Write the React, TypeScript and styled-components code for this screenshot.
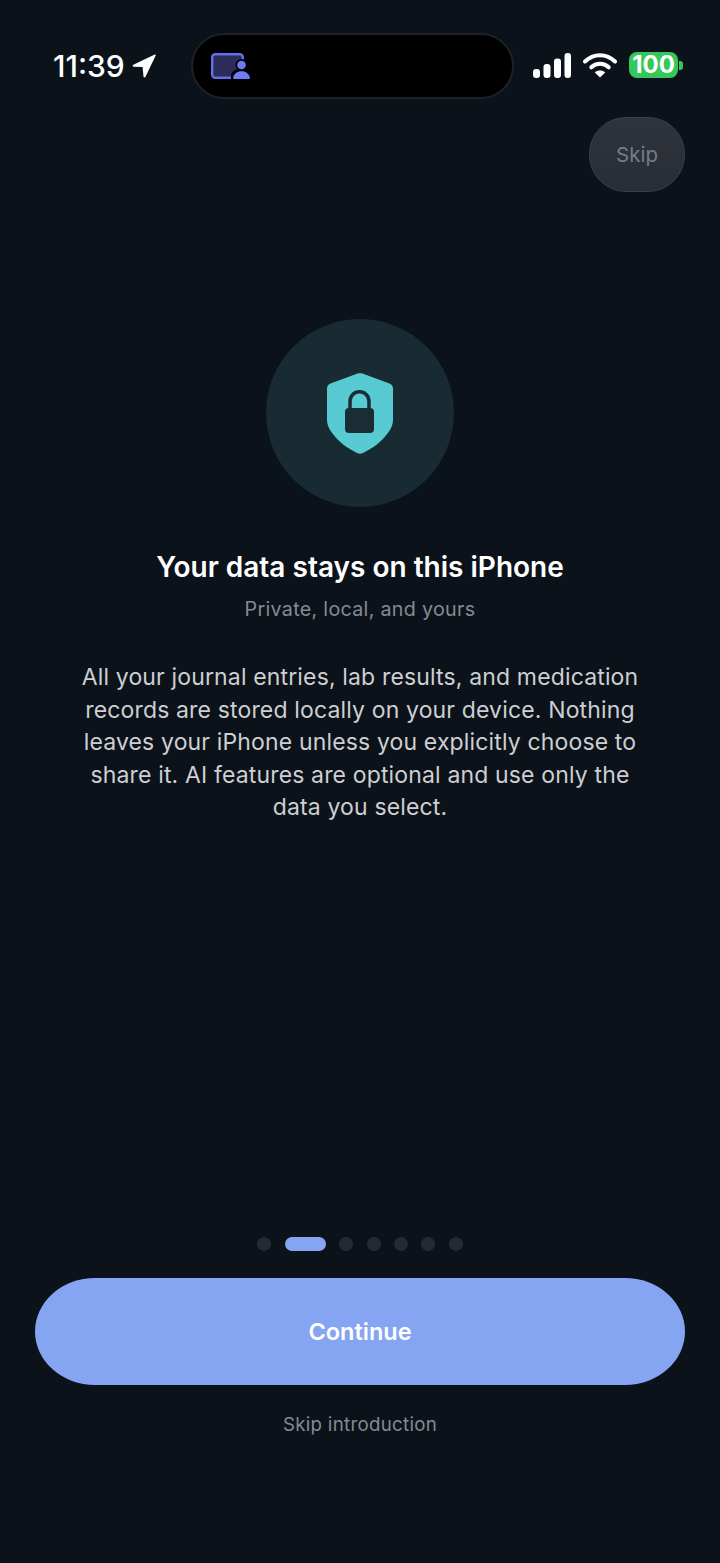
import React from 'react'
import styled, { createGlobalStyle } from 'styled-components'

const GlobalStyle = createGlobalStyle`
html, body {
  margin: 0;
  padding: 0;
  background: #0c121a;
}
* {
  box-sizing: border-box;
}
`

const DOT_COUNT = 7
const ACTIVE_DOT = 1

const App = () => {
  return (
    <Page>
      <GlobalStyle />
      <StatusBar>
        <TimeGroup>
          <Time>11:39</Time>
          <svg width="24" height="24" viewBox="0 0 24 24">
            <path d="M22.800 .6 1.300 10.800c-1 .5-.7 2 .4 2l8.900.2.9 9.500c.1 1.100 1.500 1.300 2 .3L23.700 1.600c.3-.7-.3-1.300-.9-1Z" fill="#fff" />
          </svg>
        </TimeGroup>
        <Island>
          <svg width="40" height="27" viewBox="0 0 40 27">
            <rect x="1.200" y="1.200" width="30.600" height="23.600" rx="3" fill="#2b2d58" stroke="#626eea" strokeWidth="2.400" />
            <circle cx="30.500" cy="12" r="6" fill="#000" />
            <path d="M20 27v-5c1-4 5-6 10.500-6s10 2 10 6v5Z" fill="#000" />
            <circle cx="30.500" cy="12" r="4.300" fill="#6f7bf5" />
            <path d="M23.500 26c-1 0-1.600-.7-1.400-1.600.7-3.600 4.200-6.200 8.400-6.200s7.700 2.600 8.400 6.200c.2.900-.4 1.600-1.400 1.600Z" fill="#6f7bf5" />
          </svg>
        </Island>
        <StatusIcons>
          <svg width="38" height="25" viewBox="0 0 38 25">
            <rect x="0" y="16" width="7" height="9" rx="3" fill="#fff" />
            <rect x="10.500" y="11" width="7" height="14" rx="3" fill="#fff" />
            <rect x="21" y="5.500" width="7" height="19.500" rx="3" fill="#fff" />
            <rect x="31.500" y="0" width="6.500" height="25" rx="3" fill="#fff" />
          </svg>
          <svg width="34" height="26" viewBox="0 0 34 26">
            <path d="M2 9.500C10.500 1 23.500 1 32 9.500" fill="none" stroke="#fff" strokeWidth="4" strokeLinecap="round" />
            <path d="M8.300 15.300c5-4.700 12.400-4.700 17.400 0" fill="none" stroke="#fff" strokeWidth="4" strokeLinecap="round" />
            <path d="M17 25.500 11.800 20.400c2.900-2.500 7.500-2.500 10.400 0Z" fill="#fff" />
          </svg>
          <Battery>
            <BatteryBody>100</BatteryBody>
            <BatteryCap />
          </Battery>
        </StatusIcons>
      </StatusBar>

      <SkipRow>
        <SkipButton>Skip</SkipButton>
      </SkipRow>

      <Content>
        <IconCircle>
          <svg width="66" height="81" viewBox="0 0 66 81">
            <path
              d="M30.600 .5 3.500 10.400C1.400 11.200 0 13 0 15.200V46C0 52 2 56 6 61 12 69 20 75 30 80c2 1 4 1 6 0 10-5 18-11 24-19 4-5 6-9 6-15V15.200c0-2.200-1.400-4-3.500-4.800L35.400 .5c-1.600-.5-3.200-.5-4.800 0Z"
              fill="#57cbd1"
            />
            <path
              d="M23 36V28.300a9.500 9.500 0 0 1 19 0V36"
              fill="none"
              stroke="#1a2c34"
              strokeWidth="3.500"
            />
            <rect x="18" y="35" width="29" height="25" rx="4" fill="#1a2c34" />
          </svg>
        </IconCircle>
        <Title>Your data stays on this iPhone</Title>
        <Subtitle>Private, local, and yours</Subtitle>
        <Body>
          All your journal entries, lab results, and medication
          <br />
          records are stored locally on your device. Nothing
          <br />
          leaves your iPhone unless you explicitly choose to
          <br />
          share it. AI features are optional and use only the
          <br />
          data you select.
        </Body>
      </Content>

      <Footer>
        <Dots>
          {Array.from({ length: DOT_COUNT }).map((_, i) => (
            <Dot key={i} $active={i === ACTIVE_DOT} />
          ))}
        </Dots>
        <ContinueButton>Continue</ContinueButton>
        <SkipIntro>Skip introduction</SkipIntro>
      </Footer>
    </Page>
  )
}

export default App

const Page = styled.div`
width: 720px;
height: 1563px;
background: #0c121a;
display: flex;
flex-direction: column;
overflow: hidden;
font-family: Inter, "Liberation Sans", sans-serif;
`

const StatusBar = styled.div`
display: flex;
align-items: center;
height: 66px;
margin-top: 33px;
padding-left: 53px;
`

const TimeGroup = styled.div`
display: flex;
align-items: center;
gap: 7px;
width: 138px;
`

const Time = styled.span`
font-size: 30px;
font-weight: 500;
color: #ffffff;
`

const Island = styled.div`
width: 323px;
height: 66px;
background: #000000;
border: 2px solid #1d2229;
border-radius: 33px;
display: flex;
align-items: center;
padding-left: 18px;
`

const StatusIcons = styled.div`
display: flex;
align-items: center;
margin-left: 19px;
padding-bottom: 2px;
gap: 12px;
`

const Battery = styled.div`
display: flex;
align-items: center;
gap: 1px;
`

const BatteryBody = styled.div`
width: 49px;
height: 26px;
border-radius: 8px;
background: #34c759;
color: #ffffff;
font-size: 24px;
font-weight: 700;
line-height: 26px;
text-align: center;
`

const BatteryCap = styled.div`
width: 4px;
height: 9px;
border-radius: 0 3px 3px 0;
background: #34c759;
`

const SkipRow = styled.div`
display: flex;
justify-content: flex-end;
padding: 18px 35px 0 0;
`

const SkipButton = styled.div`
width: 96px;
height: 75px;
border-radius: 37px;
background: linear-gradient(#2e333c, #282d36);
border: 1.500px solid #3a404a;
color: #767c85;
font-size: 20.500px;
display: flex;
align-items: center;
justify-content: center;
`

const Content = styled.div`
display: flex;
flex-direction: column;
align-items: center;
padding-top: 127px;
flex: 1;
`

const IconCircle = styled.div`
width: 188px;
height: 188px;
border-radius: 50%;
background: #182a32;
display: flex;
align-items: center;
justify-content: center;
`

const Title = styled.h1`
margin: 41px 0 0;
font-size: 28px;
line-height: 38px;
font-weight: 600;
color: #ffffff;
`

const Subtitle = styled.div`
margin-top: 10px;
font-size: 19.700px;
line-height: 26px;
color: #868a91;
letter-spacing: 0.3px;
`

const Body = styled.p`
margin: 39px 0 0;
font-size: 23px;
line-height: 32.500px;
color: #cdcfd2;
text-align: center;
letter-spacing: 0.15px;
`

const Footer = styled.div`
display: flex;
flex-direction: column;
align-items: center;
padding: 0 35px 125px;
`

const Dots = styled.div`
display: flex;
align-items: center;
gap: 13.400px;
`

const Dot = styled.div<{ $active: boolean }>`
width: ${p => (p.$active ? '41px' : '14px')};
height: 14px;
border-radius: 7px;
background: ${p => (p.$active ? '#85a5f2' : '#252a32')};
`

const ContinueButton = styled.div`
margin-top: 27px;
width: 650px;
height: 107px;
border-radius: 60px / 53.500px;
background: #85a5f2;
color: #ffffff;
font-size: 23.500px;
font-weight: 600;
display: flex;
align-items: center;
justify-content: center;
`

const SkipIntro = styled.div`
margin-top: 27px;
font-size: 18.700px;
line-height: 26px;
color: #868a91;
letter-spacing: 0.3px;
`
